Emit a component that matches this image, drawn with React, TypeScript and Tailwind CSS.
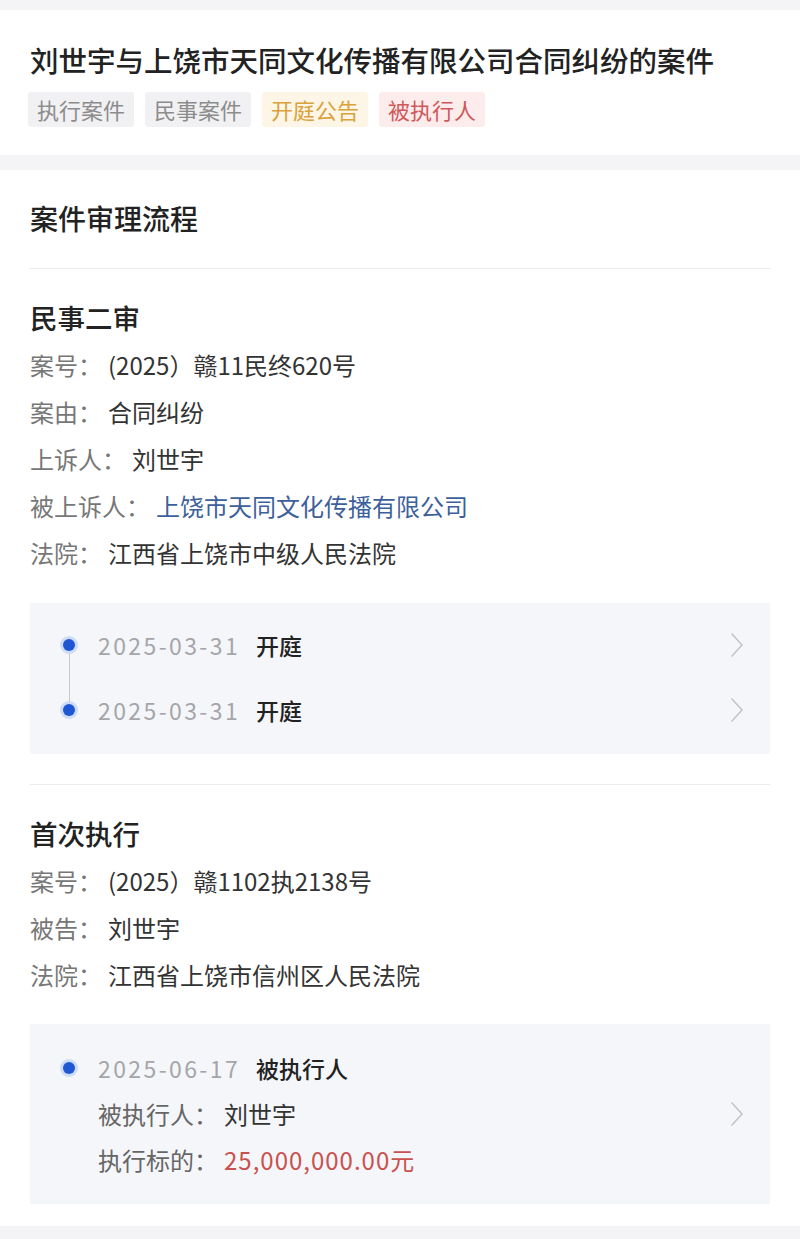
const font = { fontFamily: '"Noto Sans CJK SC", "Noto Sans", sans-serif' }

const Chevron = () => (
  <svg width="14" height="26" viewBox="0 0 14 26" fill="none" className="shrink-0">
    <path d="M2 2 L12 13 L2 24" stroke="#c4c4c8" strokeWidth="1.6" strokeLinecap="round" strokeLinejoin="round" />
  </svg>
)

const Dot = () => (
  <span className="w-[18px] h-[18px] rounded-full bg-[#cfdcf7] flex items-center justify-center shrink-0">
    <span className="w-[12px] h-[12px] rounded-full bg-[#1f56d4]" />
  </span>
)

const Tag = ({ text, cls }: { text: string; cls: string }) => (
  <span className={`h-[35px] px-[9px] flex items-center text-[22px] rounded-[3px] ${cls}`}>{text}</span>
)

const Row = ({ label, value, valueCls = 'text-[#333]' }: { label: string; value: string; valueCls?: string }) => (
  <div className="h-[47px] flex items-center text-[24px]">
    <span className="text-[#777] mr-[6px]">{label}</span>
    <span className={valueCls}>{value}</span>
  </div>
)

const Event = ({ date, title }: { date: string; title: string }) => (
  <>
    <Dot />
    <span className="ml-[20px] text-[23px] tracking-[2.4px] text-[#a5a5aa]">{date}</span>
    <span className="ml-[16px] text-[23px] text-[#222] font-medium">{title}</span>
  </>
)

export default function App() {
  return (
    <div className="w-[800px] h-[1239px] bg-[#f4f4f6] pt-[10px] overflow-hidden" style={font}>
      <div className="bg-white px-[30px] pt-[30px] pb-[28px]">
        <h1 className="text-[28.5px] leading-[40px] text-[#222] font-medium whitespace-nowrap">
          刘世宇与上饶市天同文化传播有限公司合同纠纷的案件
        </h1>
        <div className="flex gap-[11px] mt-[12px] -ml-[2px]">
          <Tag text="执行案件" cls="bg-[#f1f1f3] text-[#8c8c8c]" />
          <Tag text="民事案件" cls="bg-[#f1f1f3] text-[#8c8c8c]" />
          <Tag text="开庭公告" cls="bg-[#fdf6e6] text-[#d9a23a]" />
          <Tag text="被执行人" cls="bg-[#fcecec] text-[#d0585a]" />
        </div>
      </div>

      <div className="bg-white mt-[15px] px-[30px] pt-[30px] pb-[22px]">
        <h2 className="text-[28px] leading-[36px] text-[#222] font-medium">案件审理流程</h2>
        <div className="h-px bg-[#ececee] mt-[32px]" />

        <h3 className="text-[27.5px] leading-[36px] text-[#222] font-medium mt-[30px]">民事二审</h3>
        <div className="mt-[6px]">
          <Row label="案号：" value="(2025）赣11民终620号" />
          <Row label="案由：" value="合同纠纷" />
          <Row label="上诉人：" value="刘世宇" />
          <Row label="被上诉人：" value="上饶市天同文化传播有限公司" valueCls="text-[#3d5f9c]" />
          <Row label="法院：" value="江西省上饶市中级人民法院" />
        </div>

        <div className="mt-[27px] bg-[#f5f6fa] pl-[30px] pr-[26px] pt-[22px] pb-[24px] relative">
          <span className="absolute left-[39px] top-[50px] h-[49px] w-px bg-[#c8c8cc]" />
          <div className="flex items-center h-[40px]">
            <Event date="2025-03-31" title="开庭" />
            <span className="ml-auto"><Chevron /></span>
          </div>
          <div className="flex items-center h-[40px] mt-[25px]">
            <Event date="2025-03-31" title="开庭" />
            <span className="ml-auto"><Chevron /></span>
          </div>
        </div>

        <div className="h-px bg-[#ececee] mt-[30px]" />

        <h3 className="text-[27.5px] leading-[36px] text-[#222] font-medium mt-[30px]">首次执行</h3>
        <div className="mt-[6px]">
          <Row label="案号：" value="(2025）赣1102执2138号" />
          <Row label="被告：" value="刘世宇" />
          <Row label="法院：" value="江西省上饶市信州区人民法院" />
        </div>

        <div className="mt-[26px] bg-[#f5f6fa] pl-[30px] pr-[26px] pt-[21px] pb-[21px] flex items-center">
          <div className="flex-1">
            <div className="flex items-center h-[46px]">
              <Event date="2025-06-17" title="被执行人" />
            </div>
            <div className="h-[46px] flex items-center pl-[38px] text-[24px]">
              <span className="text-[#666] mr-[6px]">被执行人：</span>
              <span className="text-[#333]">刘世宇</span>
            </div>
            <div className="h-[46px] flex items-center pl-[38px] text-[24px]">
              <span className="text-[#666] mr-[6px]">执行标的：</span>
              <span className="text-[#c9514f] tracking-[1px]">25,000,000.00元</span>
            </div>
          </div>
          <Chevron />
        </div>
      </div>
    </div>
  )
}
